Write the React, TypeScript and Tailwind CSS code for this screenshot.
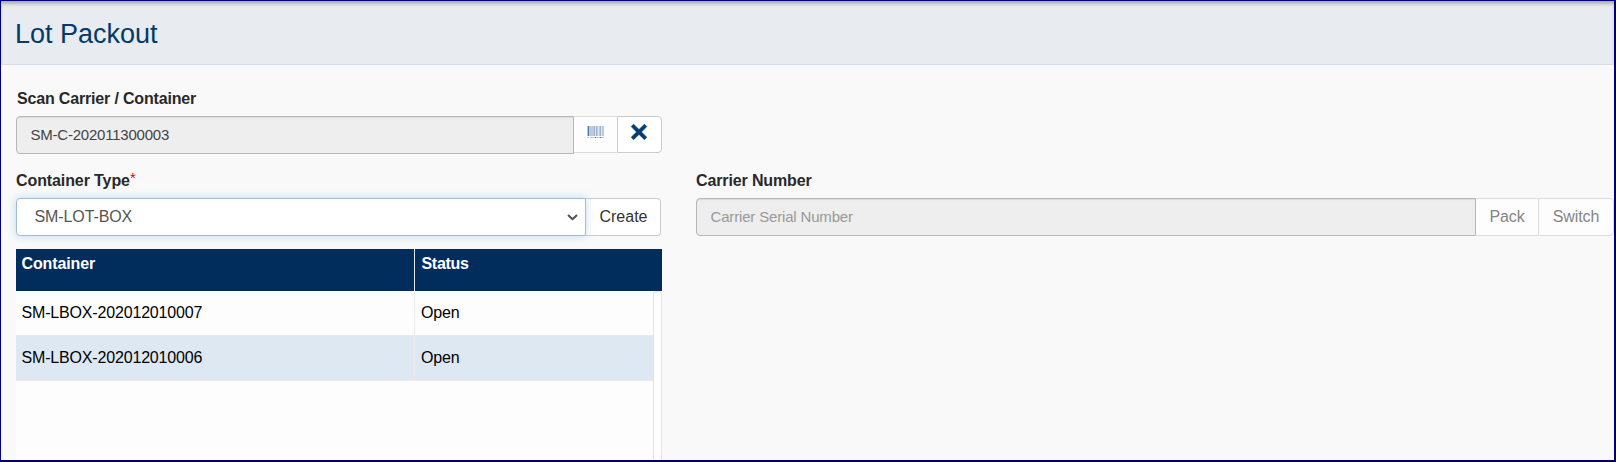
const rows = [
  { container: 'SM-LBOX-202012010007', status: 'Open', tint: 'bg-[#fdfdfd]' },
  { container: 'SM-LBOX-202012010006', status: 'Open', tint: 'bg-[#dee8f2]' },
];

function BarcodeIcon() {
  return (
    <svg width="17" height="13" viewBox="0 0 17 13" shapeRendering="crispEdges" aria-hidden="true">
      <rect width="17" height="10" fill="#bccbdb" />
      <path d="M1 0h1v10H1z" fill="#4a78a3" />
      <path d="M7 0h1v10H7zM9 0h1v10H9zM13 0h1v10h-1z" fill="#9db3c9" />
      <path d="M8 0h1v10H8zM11 0h1v10h-1zM14 0h1v10h-1z" fill="#dde5ed" />
      <path d="M0 11h2v1H0zM3 11h14v1H3z" fill="#b9c8d8" />
      <path d="M8 11h1v1H8zM13 11h1v1h-1z" fill="#4a78a3" />
    </svg>
  );
}

function TimesIcon() {
  return (
    <svg width="18" height="18" viewBox="0 0 18 18" aria-hidden="true">
      <path
        d="M3.6 1.2 9 6.5l5.4-5.3 2.4 2.4L11.5 9l5.3 5.3-2.4 2.4L9 11.4l-5.4 5.3-2.4-2.4L6.5 9 1.2 3.6z"
        fill="#043e71"
        stroke="#043e71"
        strokeWidth="0.6"
        strokeLinejoin="round"
      />
    </svg>
  );
}

export default function App() {
  return (
    <div className="flex h-[462px] w-[1616px] flex-col overflow-hidden border-r border-b border-black font-['Liberation_Sans',Arial,sans-serif]">
      <div className="flex min-h-0 flex-1 flex-col border border-[#00007f] bg-[#f9f9f9]">
        <header className="h-16 shrink-0 border-b border-[#d8dee9] bg-[#e8ebf0] pl-[14px] shadow-[inset_0_4px_4px_-2px_rgba(0,0,0,0.35)]">
          <h1 className="pt-[17px] text-[27px] leading-8 text-[#013a6b]">Lot Packout</h1>
        </header>
        <main className="grid min-h-0 flex-1 grid-cols-[646px_918px] gap-x-[34px] pl-[15px]">
          <section className="flex min-h-0 flex-col pt-[23px]">
            <label className="h-7 pl-px text-base leading-[22px] font-bold tracking-[-0.17px] text-[#292929]">Scan Carrier / Container</label>
            <div className="flex h-[38px] items-start">
              <input
                readOnly
                value="SM-C-202011300003"
                className="h-[38px] w-[558px] rounded-l-[4px] border border-[#b5b7ba] bg-[#eeeeee] pr-[14px] pb-[2px] pl-[13.5px] text-[15px] tracking-[-0.22px] text-[#444] shadow-[inset_0_1px_1px_rgba(0,0,0,0.08)] outline-none"
              />
              <button className="flex h-[37px] w-[43px] justify-center border-y border-[#dcdcdc] bg-[#fdfdfd] pt-[9px]">
                <BarcodeIcon />
              </button>
              <button className="flex h-[37px] w-[45px] justify-center rounded-r-[4px] border border-[#ccc] bg-white pt-[6px] pr-px">
                <TimesIcon />
              </button>
            </div>
            <label className="mt-[16px] h-[28px] text-base leading-[22px] font-bold tracking-[-0.1px] text-[#292929]">
              Container Type<span className="inline-block -translate-y-[3px] text-[15px] leading-none font-normal text-[#ff0000]">*</span>
            </label>
            <div className="flex h-[38px]">
              <div className="z-10 flex w-[570px] items-center justify-between rounded-l-[4px] border border-[#a3bcd6] bg-white pr-[7px] pl-[17.5px] text-base tracking-[-0.1px] text-[#555] shadow-[0_0_8px_rgba(102,175,233,0.4)]">
                <span>SM-LOT-BOX</span>
                <svg width="11" height="7" viewBox="0 0 11 7" fill="none" aria-hidden="true">
                  <path d="M1 1l4.5 4.2L10 1" stroke="#505050" strokeWidth="2" />
                </svg>
              </div>
              <button className="w-[75px] rounded-r-[4px] border border-l-0 border-[#ccc] bg-white pl-px text-base text-[#333]">Create</button>
            </div>
            <div className="mt-[13px] grid h-[42px] shrink-0 grid-cols-[399px_1fr] bg-[#012d5d] text-base leading-[18px] font-bold tracking-[-0.12px] text-white">
              <div className="border-r border-[#e7e7e7] pt-[6px] pl-[5.5px]">Container</div>
              <div className="pt-[6px] pl-[6.5px] tracking-[-0.3px]">Status</div>
            </div>
            <div className="flex min-h-0 flex-1 bg-[#fdfdfd]">
              <div className="w-[637px]">
                {rows.map((row) => (
                  <div key={row.container} className={`grid h-[45px] grid-cols-[399px_1fr] border-b border-[#eaeaea] text-base leading-[44px] text-black ${row.tint}`}>
                    <div className="border-r border-[#eaeaea] pl-[5.5px] tracking-[-0.17px]">{row.container}</div>
                    <div className="pl-[6px] tracking-[-0.2px]">{row.status}</div>
                  </div>
                ))}
              </div>
              <div className="w-[9px] rounded-t-[4px] border border-b-0 border-[#e2e2e2]" />
            </div>
          </section>
          <section className="flex flex-col pt-[105px]">
            <label className="h-[28px] text-base leading-[22px] font-bold tracking-[-0.13px] text-[#292929]">Carrier Number</label>
            <div className="flex h-[38px]">
              <input
                readOnly
                placeholder="Carrier Serial Number"
                className="h-[38px] w-[780px] rounded-l-[4px] border border-[#b5b7ba] bg-[#eeeeee] pr-[14px] pb-[2px] pl-[13.5px] text-[15px] tracking-[-0.17px] shadow-[inset_0_1px_1px_rgba(0,0,0,0.08)] outline-none placeholder:text-[#999]"
              />
              <button className="w-[62px] border-y border-[#dcdcdc] bg-[#fdfdfd] text-base tracking-[-0.1px] text-[#858585]">Pack</button>
              <button className="w-[76px] rounded-r-[4px] border border-[#dcdcdc] bg-[#fdfdfd] text-base tracking-[-0.1px] text-[#858585]">Switch</button>
            </div>
          </section>
        </main>
      </div>
    </div>
  );
}
